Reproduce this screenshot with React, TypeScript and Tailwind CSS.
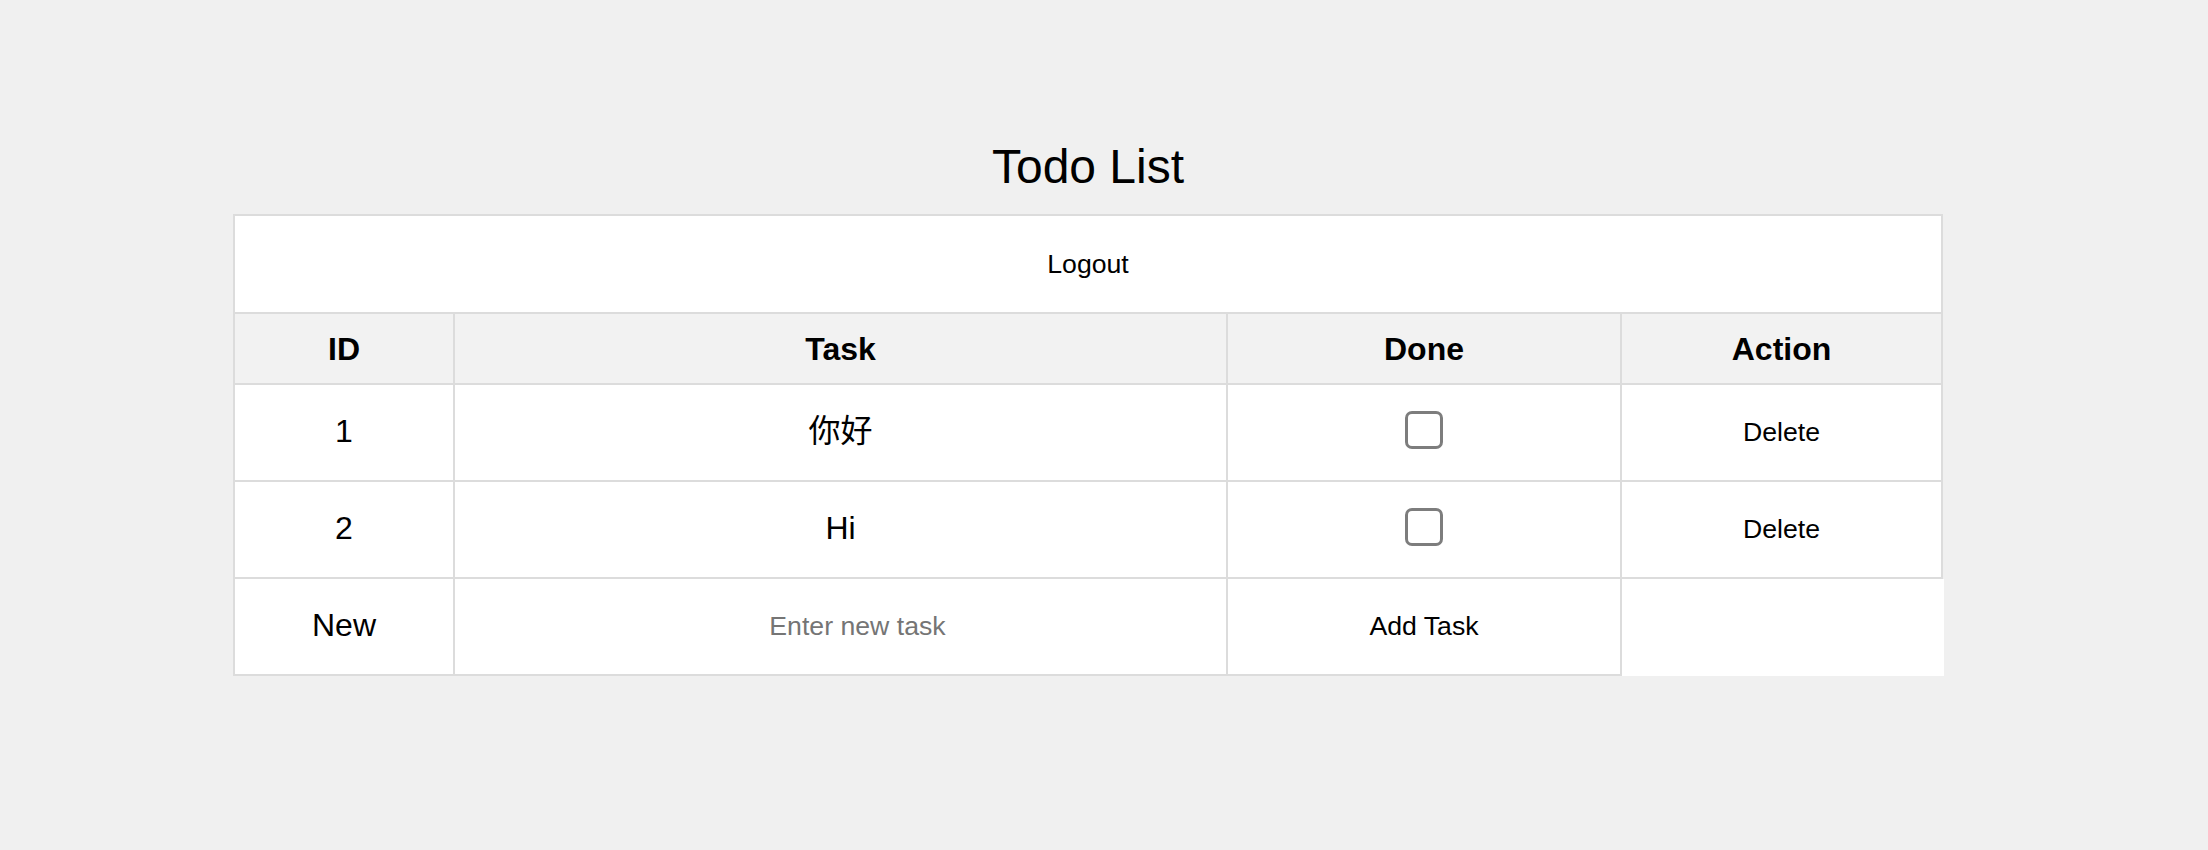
import { FC, ReactNode } from 'react';

type Todo = { id: number; task: string; done: boolean };

const todos: Todo[] = [
  { id: 1, task: '你好', done: false },
  { id: 2, task: 'Hi', done: false },
];

const cols = ['w-[220px]', 'w-[773px]', 'w-[394px]', 'w-[321px]'];

const Cell: FC<{ col: number; className?: string; children?: ReactNode }> = ({ col, className = '', children }) => (
  <div className={`${cols[col]} shrink-0 flex items-center justify-center border-r-2 border-b-2 border-[#dcdcdc] ${className}`}>
    {children}
  </div>
);

const TextButton: FC<{ children: ReactNode }> = ({ children }) => (
  <button className="bg-transparent text-[26.67px] leading-none text-black cursor-pointer">{children}</button>
);

export default function App() {
  return (
    <div
      className="min-h-[850px] bg-[#f0f0f0] pt-[143px] text-black"
      style={{ fontFamily: '"Liberation Sans", Arial, "Noto Sans CJK SC", sans-serif' }}
    >
      <div className="w-[1710px] ml-[233px]">
        <h2 className="text-center text-[48px] leading-[48px] font-normal mb-[23px]">Todo List</h2>

        <div className="flex flex-col border-l-2 border-t-2 border-[#dcdcdc] bg-white">
          {/* logout */}
          <div className="h-[98px] flex items-center justify-center border-r-2 border-b-2 border-[#dcdcdc]">
            <TextButton>Logout</TextButton>
          </div>

          {/* header */}
          <div className="flex h-[71px] bg-[#f2f2f2] text-[32px] font-bold">
            <Cell col={0}>ID</Cell>
            <Cell col={1}>Task</Cell>
            <Cell col={2}>Done</Cell>
            <Cell col={3}>Action</Cell>
          </div>

          {todos.map((todo) => (
            <div key={todo.id} className="flex h-[97px] text-[32px]">
              <Cell col={0} className="pb-[3px]">{todo.id}</Cell>
              <Cell col={1} className="pb-[3px]">{todo.task}</Cell>
              <Cell col={2}>
                <input
                  type="checkbox"
                  defaultChecked={todo.done}
                  className="appearance-none w-[38px] h-[38px] mt-[-5px] border-[3px] border-[#7d7d7d] rounded-[7px] bg-white"
                />
              </Cell>
              <Cell col={3}>
                <TextButton>Delete</TextButton>
              </Cell>
            </div>
          ))}

          {/* new task */}
          <div className="flex h-[97px] text-[32px] bg-[#f0f0f0]">
            <Cell col={0} className="bg-white pb-[3px]">New</Cell>
            <Cell col={1} className="bg-white">
              <input
                type="text"
                placeholder="Enter new task"
                className="w-full pl-[34px] text-center text-[26.67px] bg-transparent outline-none placeholder:text-[#757575]"
              />
            </Cell>
            <Cell col={2} className="bg-white">
              <TextButton>Add Task</TextButton>
            </Cell>
            <div className="w-[322px] shrink-0 bg-white" />
          </div>
        </div>
      </div>
    </div>
  );
}
